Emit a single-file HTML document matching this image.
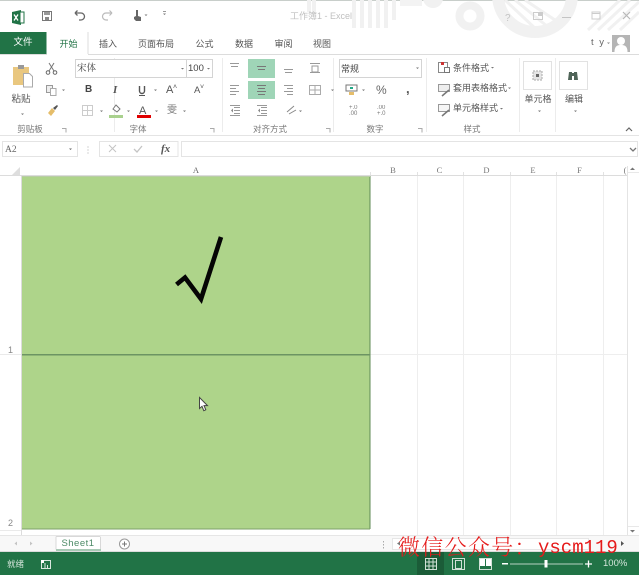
<!DOCTYPE html>
<html><head><meta charset="utf-8">
<style>
html,body{margin:0;padding:0;background:#fff}
#p{position:relative;width:639px;height:575px;overflow:hidden;background:#fff;font-family:"Liberation Sans","Noto Sans CJK SC",sans-serif;font-size:9px;color:#555}
#p div,#p span.t{position:absolute;white-space:nowrap}
.t{line-height:12px;filter:blur(.3px)}
.w{filter:none}
.c{transform:translateX(-50%)}
.s{font-family:"Liberation Serif","Noto Serif CJK SC",serif}
svg{position:absolute;left:0;top:0}
#b{filter:blur(.35px)}
</style></head><body>
<div id="p">
<svg id="b" width="639" height="575" viewBox="0 0 639 575">
 <rect x="0" y="0" width="639" height="1" fill="#c8ceca"/>
 <!-- title pattern -->
 <g fill="none" stroke="#f1f1f1">
  <path d="M492 0A43 43 0 0 0 578 0" stroke="none"/>
  <circle cx="535" cy="-5" r="37" stroke-width="12"/>
  <circle cx="470" cy="16" r="10.500" stroke-width="8"/>
  <path d="M354 0V28M362 0V28M370 0V28M378 0V28M386 0V28M394 0V20M309 0V12M314 0V12" stroke-width="4"/>
  <path d="M505 0L538 31M515 0L548 27M525 0L555 20" stroke-width="3"/>
  <path d="M588 30L620 0M598 30L630 0M608 30L639 2M620 30L639 12" stroke-width="3"/>
 </g>
 <circle cx="433" cy="-2" r="10" fill="#f1f1f1"/>
 <path d="M400 0h22v6h-22z" fill="#f3f3f3"/>
 <!-- Excel icon -->
 <path d="M12 12l9-2v15l-9-2z" fill="#217346"/>
 <rect x="20" y="12" width="4" height="11" fill="#fff" stroke="#217346" stroke-width="1"/>
 <path d="M14 14.500l4 6M18 14.500l-4 6" stroke="#fff" stroke-width="1.300"/>
 <!-- save -->
 <rect x="42.500" y="11.500" width="9" height="9" fill="none" stroke="#777"/>
 <rect x="44" y="12" width="6" height="3" fill="#999"/><rect x="45" y="17" width="4" height="3" fill="#888"/>
 <!-- undo / redo -->
 <path d="M75 13h6a3.500 3.500 0 0 1 0 7h-2M75 13l2.500-2.500M75 13l2.500 2.500" fill="none" stroke="#666" stroke-width="1.300"/>
 <path d="M112 13h-6a3.500 3.500 0 0 0 0 7h2M112 13l-2.500-2.500M112 13l-2.500 2.500" fill="none" stroke="#bbb" stroke-width="1.200"/>
 <!-- touch -->
 <path d="M136 10v6l-2 1v2l2 2h5v-4l-3-1v-6z" fill="#666"/>
 <path d="M144.500 14.500h3l-1.500 1.500zM163 13.500h3l-1.500 1.500z" fill="#777"/>
 <rect x="163" y="11" width="3" height="1" fill="#999"/>
 <!-- tabs -->
 <rect x="0" y="32" width="46.500" height="22" fill="#217346"/>
 <path d="M0 54.500H47M88 54.500H639" stroke="#dcdcdc"/>
 <path d="M88 32V54" stroke="#dcdcdc"/>
 <!-- title controls -->
 <text x="505" y="21" font-size="10" fill="#c4c4c4" font-family="Liberation Sans">?</text>
 <rect x="533.500" y="12.500" width="9" height="7" fill="none" stroke="#ccc"/><rect x="538" y="13" width="4" height="3" fill="#ccc"/>
 <path d="M562 17.500h9" stroke="#c4c4c4"/>
 <path d="M592 12h8v7h-8z" fill="none" stroke="#ccc"/><path d="M592 13.500h8" stroke="#ccc"/>
 <path d="M623 12l7 7M630 12l-7 7" stroke="#b8b8b8" stroke-width="1.200"/>
 <!-- avatar -->
 <rect x="612" y="35" width="18" height="17" fill="#b5b5b5"/>
 <circle cx="621" cy="41" r="4" fill="#fff"/><path d="M614.500 52c0-6 3-7 6.500-7s6.500 1 6.500 7z" fill="#fff"/>
 <path d="M607 42.500h3l-1.500 1.500z" fill="#888"/>
 <!-- ribbon bottom -->
 <rect x="0" y="135" width="639" height="1" fill="#e4e4e4"/>
 <path d="M114.500 58V132M222.500 58V132M333.500 58V132M426.500 58V132M519.500 58V132M555.500 58V132" stroke="#ececec"/>
 <!-- paste icon -->
 <rect x="13" y="67" width="16" height="18" fill="#e9c77f"/>
 <rect x="18" y="65" width="6" height="4" fill="#999"/>
 <path d="M23.500 73.500h6l3 3v10.500h-9z" fill="#fff" stroke="#aaa"/>
 <path d="M21 113.500h3l-1.500 1.500z" fill="#777"/>
 <!-- cut -->
 <path d="M49 63l5 8M54 63l-5 8" stroke="#777" fill="none"/><circle cx="48" cy="72.500" r="1.800" fill="none" stroke="#666"/><circle cx="55" cy="72.500" r="1.800" fill="none" stroke="#666"/>
 <!-- copy -->
 <rect x="46.500" y="85.500" width="6" height="7" fill="#eee" stroke="#999"/><rect x="50.500" y="88.500" width="5.500" height="7" fill="#fff" stroke="#aaa"/>
 <path d="M62 89.500h3l-1.500 1.500z" fill="#777"/>
 <!-- brush -->
 <path d="M48 113l4-5 3 3-4 5z" fill="#e5bd6a"/><path d="M53 108l4-3 1 1-3 4z" fill="#555"/>
 <!-- font boxes -->
 <rect x="75.500" y="59.500" width="111" height="18" fill="#fff" stroke="#d4d4d4"/>
 <rect x="186.500" y="59.500" width="26" height="18" fill="#fff" stroke="#d4d4d4"/>
 <path d="M181 68h3l-1.500 1.500zM207 68h3l-1.500 1.500z" fill="#777"/>
 <!-- U -->
 <path d="M139.500 86v5a2.500 2.500 0 0 0 5 0v-5" fill="none" stroke="#555" stroke-width="1.400"/><path d="M139 95.500h6" stroke="#555"/>
 <path d="M154 89.500h3l-1.500 1.500zM100 110.500h3l-1.500 1.500zM127 110.500h3l-1.500 1.500zM155 110.500h3l-1.500 1.500zM183 110.500h3l-1.500 1.500z" fill="#777"/>
 <!-- border icon -->
 <rect x="82.500" y="105.500" width="10" height="10" fill="none" stroke="#ccc"/><path d="M87.500 105v10M82 110.500h10" stroke="#ccc"/>
 <!-- fill -->
 <path d="M116 105l4 4-3 3-4-3z" fill="#fff" stroke="#777"/>
 <rect x="109" y="115" width="14" height="3" fill="#a9d18e"/>
 <!-- font color bar -->
 <rect x="137" y="115" width="14" height="3" fill="#e00000"/>
 <!-- align -->
 <rect x="248" y="59" width="27" height="19" fill="#9fd5b7"/>
 <rect x="248" y="81" width="27" height="18" fill="#9fd5b7"/>
 <g stroke="#999">
  <path d="M230 63.500h9M231 66.500h7"/>
  <path d="M257 66.500h9M258 69.500h7" stroke="#777"/>
  <path d="M284 69.500h9M285 72.500h7"/>
  <path d="M230 85.500h9M230 88.500h6M230 91.500h9M230 94.500h6"/>
  <path d="M257 85.500h9M258 88.500h7M257 91.500h9M258 94.500h7" stroke="#777"/>
  <path d="M284 85.500h9M287 88.500h6M284 91.500h9M287 94.500h6"/>
  <path d="M234 107.500h6M234 110.500h6M234 113.500h6M230 105.500h10M230 115.500h10"/>
  <path d="M261 107.500h6M261 110.500h6M261 113.500h6M257 105.500h10M257 115.500h10"/>
  <path d="M310 63.500h10M310 72.500h10"/>
 </g>
 <path d="M231 110.500l2-2v4zM258 110.500l2 2v-4z" fill="#888"/>
 <path d="M287 112l7-6M289 114l7-4" stroke="#888" fill="none"/>
 <path d="M299 110.500h3l-1.500 1.500zM331 89.500h3l-1.500 1.500z" fill="#777"/>
 <rect x="309.500" y="85.500" width="11" height="9" fill="none" stroke="#aaa"/><path d="M309 90h12M315 85v10" stroke="#aaa"/>
 <rect x="312" y="66" width="6" height="6" fill="none" stroke="#999"/>
 <!-- number format box -->
 <rect x="339.500" y="59.500" width="82" height="18" fill="#fff" stroke="#d4d4d4"/>
 <path d="M416 67.500h3l-1.500 1.500z" fill="#777"/>
 <rect x="346" y="85" width="11" height="6" fill="#fff" stroke="#777"/><rect x="350" y="87" width="3" height="2" fill="#2a8"/><rect x="349" y="92" width="5" height="3" fill="#e5bd6a"/>
 <path d="M362 89.500h3l-1.500 1.500z" fill="#777"/>
 <!-- styles icons -->
 <rect x="438.500" y="62.500" width="9" height="10" fill="#fff" stroke="#888"/><rect x="441" y="62" width="3" height="3" fill="#c33"/><rect x="444.500" y="67.500" width="5" height="5" fill="#fff" stroke="#777"/>
 <rect x="438.500" y="84.500" width="11" height="7" fill="#eee" stroke="#999"/><path d="M442 96l7-6" stroke="#777" stroke-width="1.500"/>
 <rect x="438.500" y="104.500" width="11" height="7" fill="#f6f6f6" stroke="#999"/><path d="M442 116l7-6" stroke="#777" stroke-width="1.500"/>
 <path d="M491 67h3l-1.500 1.500zM508 87.500h3l-1.500 1.500zM500 108h3l-1.500 1.500z" fill="#777"/>
 <!-- cells / edit -->
 <rect x="523.500" y="61.500" width="28" height="28" fill="#fff" stroke="#e2e2e2"/>
 <rect x="559.500" y="61.500" width="28" height="28" fill="#fff" stroke="#e2e2e2"/>
 <rect x="533" y="71" width="9" height="9" fill="#e5e5e5" stroke="#aaa" stroke-dasharray="2 1"/><rect x="536" y="74" width="3" height="3" fill="#666"/>
 <path d="M569 72h3v1h2v-1h3l1 8h-4v-4h-2v4h-4z" fill="#4f6458"/>
 <path d="M538 110.500h3l-1.500 1.500zM574 110.500h3l-1.500 1.500z" fill="#777"/>
 <path d="M626 131l3-3 3 3" fill="none" stroke="#666" stroke-width="1.200"/>
 <!-- launchers -->
 <g fill="none" stroke="#aaa"><path d="M62 128.500h4v4M210 128.500h4v4M326 128.500h4v4M418 128.500h4v4"/></g>
 <!-- formula bar -->
 <rect x="2.500" y="141.500" width="75" height="15" fill="#fff" stroke="#e4e4e4"/>
 <path d="M69 148.500h3l-1.500 1.500z" fill="#666"/>
 <path d="M88 146.500v1M88 149.500v1M88 152.500v1" stroke="#aaa"/>
 <rect x="99.500" y="141.500" width="78.500" height="15" fill="#fff" stroke="#e4e4e4"/>
 <rect x="181.500" y="141.500" width="456" height="15" fill="#fff" stroke="#e4e4e4"/>
 <path d="M109 145l7 7M116 145l-7 7" stroke="#c4c4c4"/>
 <path d="M134 149l3 3 5-6" stroke="#c4c4c4" fill="none" stroke-width="1.300"/>
 <path d="M630 148l3 3 3-3" stroke="#777" fill="none" stroke-width="1.300"/>
 <!-- grid headers -->
 <path d="M12 175l8-8v8z" fill="#dedede"/>
 <rect x="0" y="175" width="627" height="1" fill="#dcdcdc"/>
 <rect x="21" y="176" width="1" height="360" fill="#dcdcdc"/>
 <g stroke="#eeeeee">
  <path d="M417.500 176V536M463.500 176V536M510.500 176V536M556.500 176V536M603.500 176V536M370 354.500H627"/>
 </g>
 <path d="M370.500 172V175M417.500 172V175M463.500 172V175M510.500 172V175M556.500 172V175M603.500 172V175" stroke="#e2e2e2"/>
 <path d="M0 354.500h21M0 530.500h21" stroke="#eaeaea"/>
 <!-- vertical scroll -->
 <rect x="627" y="166" width="1" height="370" fill="#e4e4e4"/>
 <path d="M630 170h5l-2.500-2.500z" fill="#777"/>
 <path d="M630 530h5l-2.500 2.500z" fill="#777"/>
 <rect x="628" y="526" width="11" height="1" fill="#e8e8e8"/>
 <rect x="628" y="172" width="11" height="1" fill="#e8e8e8"/>
 <!-- sheet tab bar -->
 <rect x="0" y="536" width="639" height="16" fill="#f8f8f8"/>
 <rect x="0" y="535" width="639" height="1" fill="#e6e6e6"/>
 <rect x="0" y="551" width="639" height="1" fill="#dcdcdc"/>
 <path d="M17 541.500v4l-2.500-2zM30 541.500v4l2.500-2z" fill="#c4c4c4"/>
 <rect x="56" y="536" width="45" height="14" fill="#fff"/>
 <path d="M56 536.500V549.500M100.500 536.500V549.500M56 536.500H100" stroke="#d8d8d8"/>
 <rect x="56" y="549" width="45" height="2" fill="#a8c9b5"/>
 <circle cx="124.500" cy="544" r="5" fill="#fff" stroke="#999"/>
 <path d="M122 544h5M124.500 541.500v5" stroke="#777"/>
 <path d="M383.500 541v1.500M383.500 544v1.500M383.500 547v1.500" stroke="#aaa"/>
 <rect x="392.500" y="538.500" width="196" height="11" fill="#fff" stroke="#e6e6e6"/>
 <path d="M400 541.500v4l-3-2z" fill="#777"/>
 <path d="M621 541l3 2.500-3 2.500z" fill="#555"/>
 <!-- status bar -->
 <rect x="0" y="552" width="639" height="23" fill="#217346"/>
 <rect x="417" y="552" width="27" height="23" fill="#1b5c38"/>
 <rect x="41.500" y="560.500" width="9" height="8" fill="none" stroke="#d8e6dd"/><rect x="41" y="560" width="3" height="3" fill="#fff"/>
 <path d="M45 563v5M47.500 565v3" stroke="#d8e6dd"/>
 <g fill="none" stroke="#cfe0d6">
  <rect x="425.500" y="558.500" width="11" height="11"/><path d="M429 558v12M433 558v12M425 562h12M425 566h12"/>
  <rect x="452.500" y="558.500" width="12" height="11"/><rect x="455.500" y="560.500" width="6" height="8"/>
 </g>
 <rect x="479.500" y="558.500" width="12" height="11" fill="none" stroke="#cfe0d6"/>
 <rect x="480" y="559" width="5" height="7" fill="#fff"/><rect x="486" y="559" width="5" height="7" fill="#fff"/>
 <rect x="502" y="563" width="6" height="1.500" fill="#fff"/>
 <rect x="510" y="563.500" width="73" height="1" fill="#b6d0c1"/>
 <rect x="544.500" y="560" width="3" height="7.500" fill="#fff"/>
 <path d="M585 564h7M588.500 560.500v7" stroke="#fff" stroke-width="1.300"/>
</svg>
<svg width="639" height="575" viewBox="0 0 639 575">
 <!-- selected cell -->
 <rect x="22" y="176" width="348" height="353" fill="#aed48a"/>
 <rect x="369.500" y="176" width="1" height="353" fill="#5f8a55"/>
 <rect x="22" y="354" width="348" height="1.500" fill="#6c9463"/>
 <rect x="22" y="528.500" width="348" height="1" fill="#7da26a"/>
 <rect x="22" y="176" width="348" height="1" fill="#b9cda6"/>
 <!-- tick -->
 <path d="M176.500 284.500L185 277.500L201 299L221 237" fill="none" stroke="#050505" stroke-width="4.600" stroke-linejoin="miter" stroke-miterlimit="8"/>
 <!-- cursor -->
 <path d="M199.500 397.500v11l2.500-2.200 1.800 4.400 2-.9-1.800-4.200h3.500z" fill="#fff" stroke="#444" stroke-width="1"/>
</svg>

<span class="t c" style="left:23px;top:37px;color:#fff;font-size:9.500px">文件</span>
<span class="t c" style="left:68.500px;top:38px;color:#217346;font-size:9px">开始</span>
<span class="t c" style="left:108px;top:38px;font-size:9px">插入</span>
<span class="t c" style="left:156px;top:38px;font-size:9px">页面布局</span>
<span class="t c" style="left:204.500px;top:38px;font-size:9px">公式</span>
<span class="t c" style="left:244px;top:38px;font-size:9px">数据</span>
<span class="t c" style="left:283.500px;top:38px;font-size:9px">审阅</span>
<span class="t c" style="left:322px;top:38px;font-size:9px">视图</span>
<span class="t" style="left:290px;top:10px;color:#c0c0c0;font-size:9px">工作簿1 - Excel</span>
<span class="t" style="left:591px;top:37px;font-size:9.500px;letter-spacing:1.500px;color:#666">t y</span>

<span class="t c" style="left:21px;top:94px;font-size:9.500px">粘贴</span>
<span class="t s" style="left:77px;top:63px;font-size:9.500px;color:#444">宋体</span>
<span class="t" style="left:188px;top:63px;font-size:9.500px;color:#444">100</span>
<span class="t" style="left:85px;top:84px;font-size:10px;font-weight:bold;color:#444">B</span>
<span class="t s" style="left:113px;top:84px;font-size:11px;font-style:italic;font-weight:bold;color:#555">I</span>
<span class="t" style="left:166px;top:84px;font-size:11px;color:#555">A</span>
<span class="t" style="left:173px;top:82px;font-size:7px;color:#555">˄</span>
<span class="t" style="left:194px;top:85px;font-size:9.500px;color:#555">A</span>
<span class="t" style="left:200px;top:82px;font-size:7px;color:#555">˅</span>
<span class="t" style="left:139px;top:105px;font-size:11px;color:#555">A</span>
<span class="t" style="left:167px;top:105px;font-size:10px;color:#777">雯</span>
<span class="t c" style="left:30px;top:123px;font-size:8.500px;color:#777">剪贴板</span>
<span class="t c" style="left:138px;top:123px;font-size:8.500px;color:#777">字体</span>
<span class="t c" style="left:270px;top:123px;font-size:8.500px;color:#777">对齐方式</span>
<span class="t c" style="left:375px;top:123px;font-size:8.500px;color:#777">数字</span>
<span class="t c" style="left:472px;top:123px;font-size:8.500px;color:#777">样式</span>
<span class="t" style="left:341px;top:63px;font-size:9px;color:#444">常规</span>
<span class="t" style="left:376px;top:84px;font-size:12px;color:#666">%</span>
<span class="t" style="left:406px;top:83px;font-size:13px;font-weight:bold;color:#555">,</span>
<span class="t" style="left:349px;top:105px;font-size:6px;line-height:6px;color:#777;white-space:pre">+.0
.00</span>
<span class="t" style="left:377px;top:105px;font-size:6px;line-height:6px;color:#777;white-space:pre">.00
+.0</span>
<span class="t" style="left:453px;top:61.500px;font-size:9px">条件格式</span>
<span class="t" style="left:453px;top:82px;font-size:9px">套用表格格式</span>
<span class="t" style="left:453px;top:102px;font-size:9px">单元格样式</span>
<span class="t c" style="left:538px;top:93px;font-size:9px">单元格</span>
<span class="t c" style="left:574px;top:93px;font-size:9px">编辑</span>
<span class="t s" style="left:5px;top:144px;font-size:9.500px;color:#666">A2</span>
<span class="t s" style="left:161px;top:143px;font-size:11px;font-style:italic;font-weight:bold;color:#555">fx</span>
<span class="t c s" style="left:196px;top:165px;font-size:8.500px;color:#666;line-height:10px">A</span>
<span class="t c s" style="left:393px;top:165px;font-size:8.500px;color:#777;line-height:10px">B</span>
<span class="t c s" style="left:439.500px;top:165px;font-size:8.500px;color:#777;line-height:10px">C</span>
<span class="t c s" style="left:486.500px;top:165px;font-size:8.500px;color:#777;line-height:10px">D</span>
<span class="t c s" style="left:533px;top:165px;font-size:8.500px;color:#777;line-height:10px">E</span>
<span class="t c s" style="left:579.500px;top:165px;font-size:8.500px;color:#777;line-height:10px">F</span>
<span class="t c s" style="left:625px;top:165px;font-size:8.500px;color:#777;line-height:10px">(</span>
<span class="t c" style="left:10.500px;top:344px;font-size:9px;color:#888">1</span>
<span class="t c" style="left:10.500px;top:517px;font-size:9px;color:#888">2</span>
<span class="t c" style="left:78px;top:537.500px;font-size:9.500px;letter-spacing:.5px;color:#4c8a66">Sheet1</span>
<span class="t" style="left:7px;top:558px;font-size:8.500px;color:#d5e5db">就绪</span>
<span class="t" style="left:603px;top:558px;font-size:9.500px;color:#d5e5db">100%</span>
<!-- watermark -->
<span class="t w" style="left:398px;top:535px;font-family:'Liberation Serif','Noto Serif CJK SC',serif;font-size:22px;line-height:26px;letter-spacing:1.300px;color:#e51a1a;font-weight:300">微信公众号：</span>
<span class="t w" style="left:538px;top:536px;font-family:'Liberation Mono',monospace;font-size:19px;line-height:24px;color:#e51a1a">yscm119</span>
</div>
</body></html>
